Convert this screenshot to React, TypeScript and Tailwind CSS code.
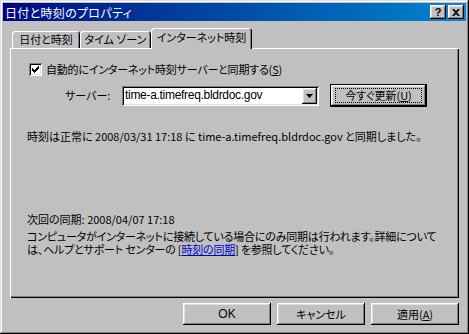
import React from 'react';

const raised =
  'bg-[#c0c0c0] shadow-[inset_-1px_-1px_#000,inset_1px_1px_#fff,inset_-2px_-2px_#808080,inset_2px_2px_#dfdfdf]';

function Button({ children, className = '' }: { children: React.ReactNode; className?: string }) {
  return (
    <div className={`${raised} flex items-center justify-center text-[11px] text-black ${className}`}>
      {children}
    </div>
  );
}

export default function App() {
  return (
    <div className="w-[469px] h-[334px] bg-[#c0c0c0] p-[3px] flex flex-col overflow-hidden font-['Noto_Sans_CJK_JP',sans-serif] [font-feature-settings:'palt'] text-[11px] leading-[13px] text-black shadow-[inset_-1px_-1px_#000,inset_1px_1px_#dfdfdf,inset_-2px_-2px_#808080,inset_2px_2px_#fff]">
      {/* Title bar */}
      <div className="h-[18px] flex items-center bg-gradient-to-r from-[#000080] to-[#1084d0] pl-[2px] pr-[2px]">
        <span className="text-white text-[12px] tracking-[0.3px]">日付と時刻のプロパティ</span>
        <div className="ml-auto flex gap-[2px]">
          <div className={`${raised} w-[16px] h-[14px] flex items-center justify-center text-[11px] font-bold leading-none font-['Liberation_Sans',sans-serif]`}>
            ?
          </div>
          <div className={`${raised} w-[16px] h-[14px] flex items-center justify-center`}>
            <svg width="8" height="7" viewBox="0 0 8 7">
              <path d="M0 0h2l2 2 2-2h2L5 3.5 8 7H6L4 5 2 7H0l3-3.5z" fill="#000" />
            </svg>
          </div>
        </div>
      </div>

      {/* Body */}
      <div className="flex-1 flex flex-col px-[7px]">
        {/* Tabs */}
        <div className="mt-[7px] h-[20px] flex items-end pl-[2px]">
          <div className="w-[68px] h-[17px] flex items-center justify-center rounded-t-[3px] shadow-[inset_1px_1px_#fff,inset_-1px_0_#000,inset_-2px_0_#808080]">
            日付と時刻
          </div>
          <div className="w-[71px] h-[17px] flex items-center justify-center rounded-t-[3px] shadow-[inset_1px_1px_#fff,inset_-1px_0_#000,inset_-2px_0_#808080]">
            タイム ゾーン
          </div>
          <div className="relative z-10 w-[101px] h-[21px] mb-[-1px] bg-[#c0c0c0] flex items-center justify-center pb-[2px] rounded-t-[3px] shadow-[inset_1px_1px_#fff,inset_-1px_0_#000,inset_-2px_0_#808080]">
            インターネット時刻
          </div>
        </div>

        {/* Panel */}
        <div className="h-[250px] flex flex-col pl-[17px] shadow-[inset_1px_1px_#fff,inset_-1px_-1px_#000,inset_-2px_-2px_#808080]">
          <div className="mt-[14px] h-[14px] flex items-center ml-[2px]">
            <div className="w-[13px] h-[13px] bg-white flex items-center justify-center shadow-[inset_1px_1px_#808080,inset_-1px_-1px_#fff,inset_2px_2px_#000,inset_-2px_-2px_#dfdfdf]">
              <svg width="7" height="7" viewBox="0 0 7 7">
                <path d="M0 2h1v1h1v1h1V3h1V2h1V1h1V0h1v3H6v1H5v1H4v1H3v1H2V6H1V5H0z" fill="#000" />
              </svg>
            </div>
            <span className="ml-[4px] tracking-[-0.2px]">
              自動的にインターネット時刻サーバーと同期する(<span className="underline">S</span>)
            </span>
          </div>

          <div className="mt-[8px] h-[23px] flex items-center">
            <span className="ml-[38px] w-[57px]">サーバー:</span>
            <div className="w-[197px] h-[20px] bg-white flex items-center pl-[3px] pr-[2px] shadow-[inset_1px_1px_#808080,inset_-1px_-1px_#fff,inset_2px_2px_#000,inset_-2px_-2px_#dfdfdf]">
              <span className="flex-1 font-['Liberation_Sans',sans-serif] text-[12px] tracking-[-0.3px]">time-a.timefreq.bldrdoc.gov</span>
              <div className={`${raised} w-[15px] h-[16px] flex items-center justify-center`}>
                <svg width="7" height="4" viewBox="0 0 7 4">
                  <path d="M0 0h7L3.5 4z" fill="#000" />
                </svg>
              </div>
            </div>
            <div className="ml-[11px] w-[97px] h-[23px] border border-black">
              <Button className="w-full h-full">
                <div className="w-[87px] h-[15px] border border-dotted border-black flex items-center justify-center">
                  今すぐ更新(<span className="underline">U</span>)
                </div>
              </Button>
            </div>
          </div>

          <div className="mt-[23px] whitespace-nowrap">
            時刻は正常に 2008/03/31 17:18 に time-a.timefreq.bldrdoc.gov と同期しました。
          </div>

          <div className="mt-[70px]">次回の同期: 2008/04/07 17:18</div>

          <div className="mt-[4px] whitespace-nowrap tracking-[-0.2px]">
            コンピュータがインターネットに接続している場合にのみ同期は行われます。詳細について
          </div>
          <div className="whitespace-nowrap tracking-[-0.2px]">
            は、ヘルプとサポート センターの [<span className="text-[#0000cc] underline">時刻の同期</span>] を参照してください。
          </div>
        </div>

        {/* Bottom buttons */}
        <div className="mt-[5px] flex justify-end gap-[6px]">
          <Button className="w-[88px] h-[22px] font-['Liberation_Sans',sans-serif] text-[12px]">OK</Button>
          <Button className="w-[88px] h-[22px]">キャンセル</Button>
          <Button className="w-[88px] h-[22px]">
            適用(<span className="underline">A</span>)
          </Button>
        </div>
      </div>
    </div>
  );
}
